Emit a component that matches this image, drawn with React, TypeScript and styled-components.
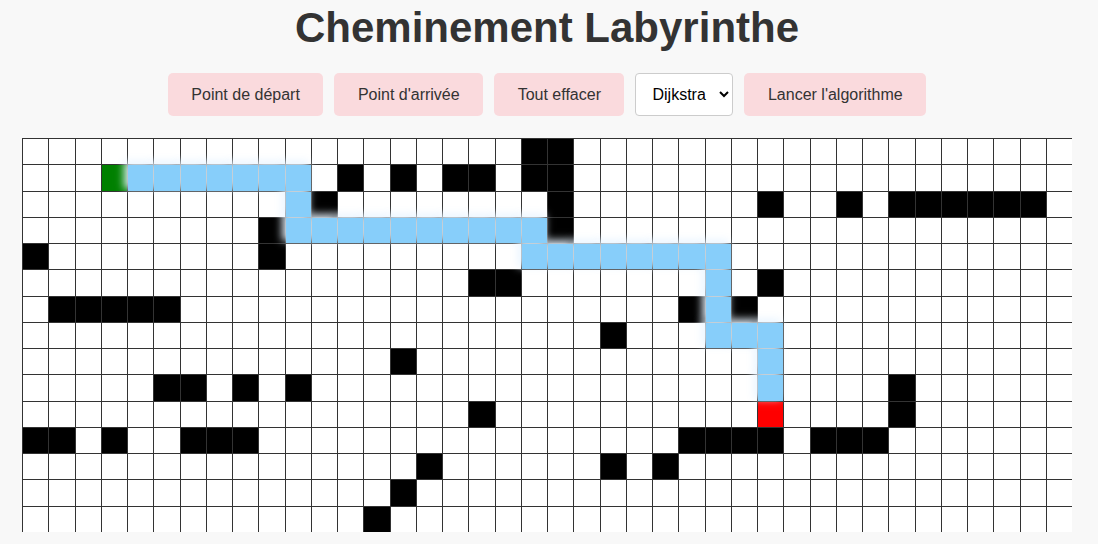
import React from "react";
import styled, { createGlobalStyle, css } from "styled-components";

const GlobalStyle = createGlobalStyle`
  html, body {
    margin: 0;
    padding: 0;
    background: #f8f8f8;
    font-family: "Liberation Sans", Arial, sans-serif;
    overflow: hidden;
  }
`;

const Page = styled.div`
  padding: 4px 26px 0 22px;
  display: flex;
  flex-direction: column;
  align-items: center;
`;

const Title = styled.h1`
  margin: 0;
  font-size: 42px;
  font-weight: bold;
  color: #333;
  line-height: 48px;
`;

const Toolbar = styled.div`
  margin-top: 21px;
  display: flex;
  gap: 11px;
  align-items: center;
`;

const Button = styled.button`
  height: 43px;
  padding: 0 23.5px;
  border: none;
  border-radius: 5px;
  background: #fadadd;
  color: #333;
  font-family: "Liberation Sans", Arial, sans-serif;
  font-size: 16px;
  cursor: pointer;
`;

const Select = styled.select`
  height: 43px;
  width: 98px;
  padding: 0 8px 0 12px;
  border: 1px solid #ccc;
  border-radius: 4px;
  background: #fff;
  color: #000;
  font-family: "Liberation Sans", Arial, sans-serif;
  font-size: 16px;
`;

const Grid = styled.div`
  margin-top: 22px;
  width: 1050px;
  display: grid;
  grid-template-columns: repeat(40, 1fr);
  grid-auto-rows: 26.25px;
  background: #fff;
`;

type Kind = "empty" | "wall" | "path" | "start" | "end";

const Cell = styled.div<{ $kind: Kind }>`
  box-sizing: border-box;
  border-top: 1px solid #333;
  border-left: 1px solid #333;
  position: relative;
  background: ${(p) =>
    p.$kind === "wall"
      ? "#000"
      : p.$kind === "start"
      ? "#008000"
      : p.$kind === "end"
      ? "#ff0000"
      : "#fff"};
  ${(p) =>
    p.$kind === "path" &&
    css`
      &::before {
        content: "";
        position: absolute;
        inset: 0;
        z-index: 1;
        box-shadow: -3px -3px 8px 1px rgba(232, 244, 255, 0.92);
      }
      &::after {
        content: "";
        position: absolute;
        inset: 0;
        z-index: 2;
        background: #87cefa;
      }
    `}
`;

const walls: Record<number, number[]> = {
  0: [19, 20],
  1: [12, 14, 16, 17, 19, 20],
  2: [11, 20, 28, 31, 33, 34, 35, 36, 37, 38],
  3: [9, 20],
  4: [0, 9],
  5: [17, 18, 28],
  6: [1, 2, 3, 4, 5, 25, 27],
  7: [22],
  8: [14],
  9: [5, 6, 8, 10, 33],
  10: [17, 33],
  11: [0, 1, 3, 6, 7, 8, 25, 26, 27, 28, 30, 31, 32],
  12: [15, 22, 24],
  13: [14],
  14: [13],
};

const range = (a: number, b: number) =>
  Array.from({ length: b - a + 1 }, (_, i) => a + i);

const path: Record<number, number[]> = {
  1: range(4, 10),
  2: [10],
  3: range(10, 19),
  4: range(19, 26),
  5: [26],
  6: [26],
  7: [26, 27, 28],
  8: [28],
  9: [28],
};

const ROWS = 15;
const COLS = 40;

function kindOf(r: number, c: number): Kind {
  if (r === 1 && c === 3) return "start";
  if (r === 10 && c === 28) return "end";
  if (walls[r]?.includes(c)) return "wall";
  if (path[r]?.includes(c)) return "path";
  return "empty";
}

export default function App() {
  const cells = [];
  for (let r = 0; r < ROWS; r++) {
    for (let c = 0; c < COLS; c++) {
      cells.push(<Cell key={`${r}-${c}`} $kind={kindOf(r, c)} />);
    }
  }
  return (
    <>
      <GlobalStyle />
      <Page>
        <Title>Cheminement Labyrinthe</Title>
        <Toolbar>
          <Button>Point de départ</Button>
          <Button>Point d'arrivée</Button>
          <Button>Tout effacer</Button>
          <Select defaultValue="dijkstra">
            <option value="dijkstra">Dijkstra</option>
            <option value="astar">A*</option>
          </Select>
          <Button>Lancer l'algorithme</Button>
        </Toolbar>
        <Grid>{cells}</Grid>
      </Page>
    </>
  );
}
